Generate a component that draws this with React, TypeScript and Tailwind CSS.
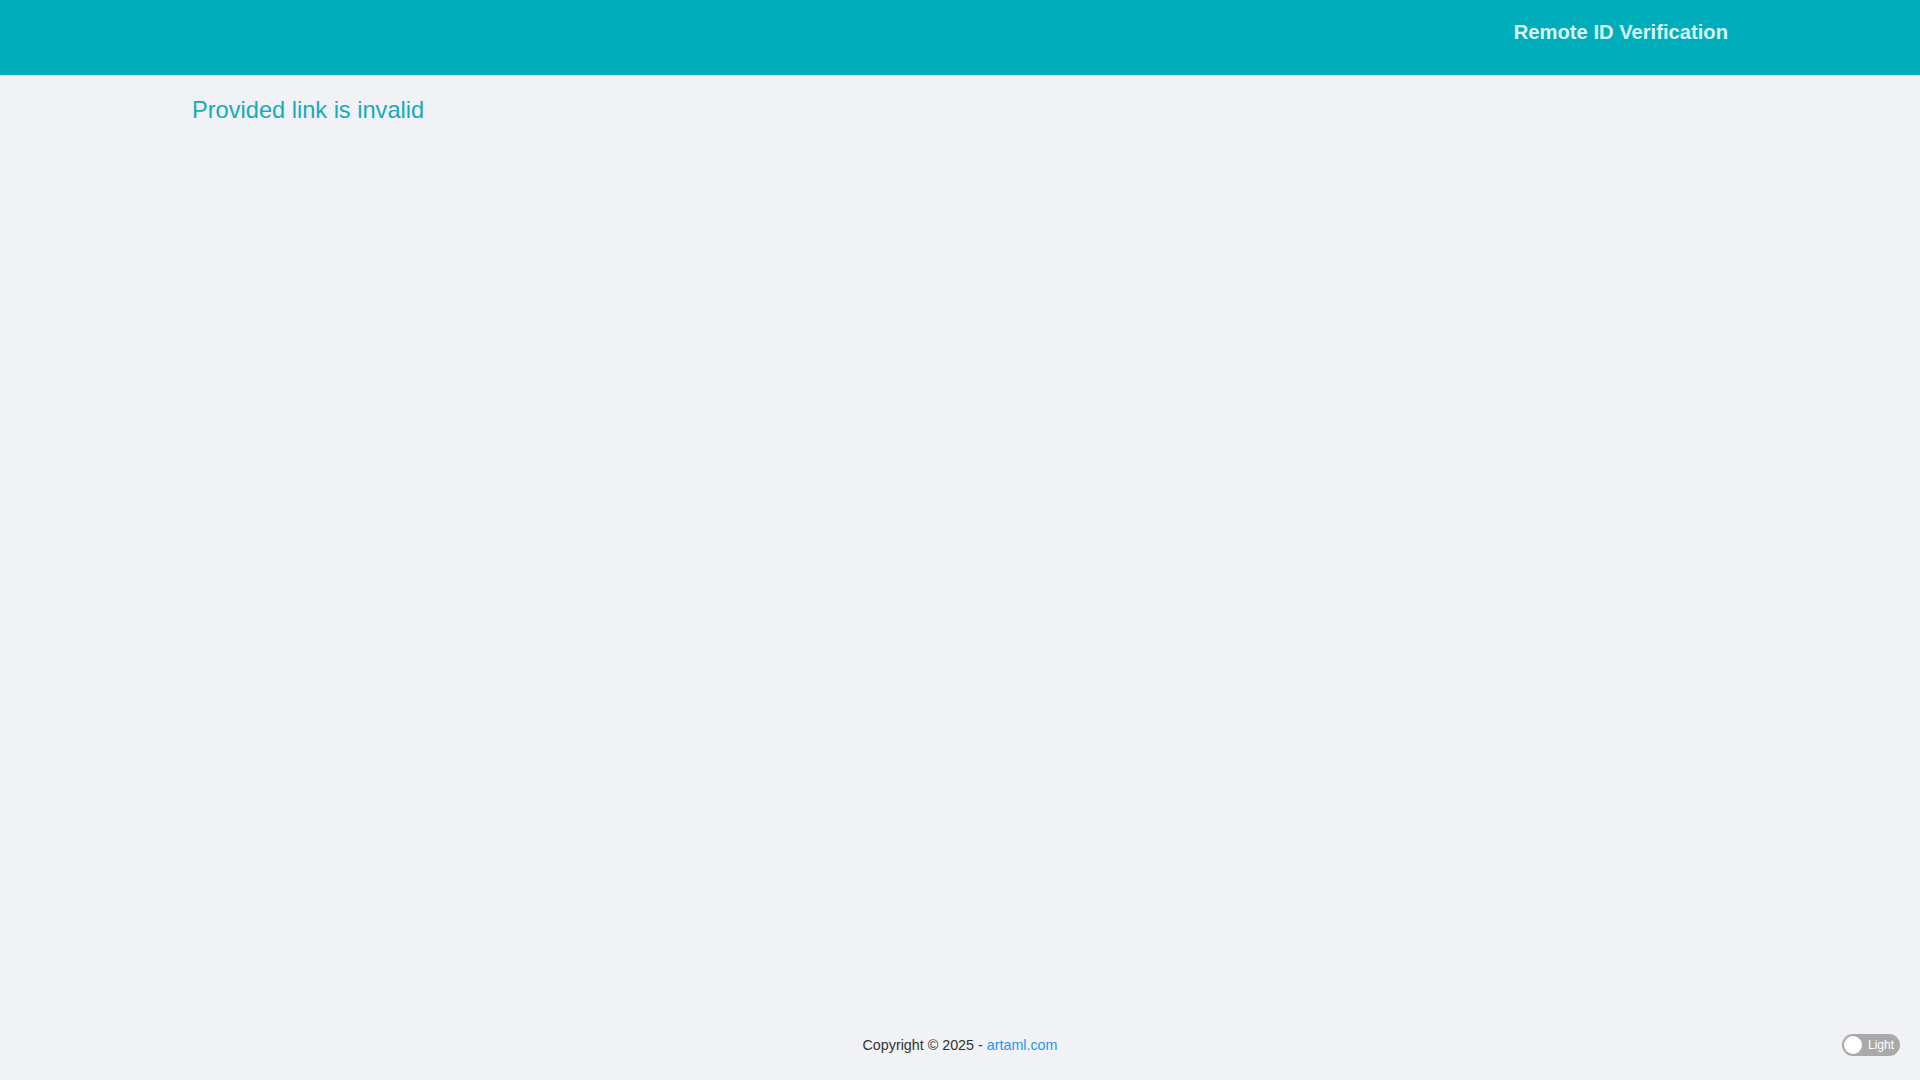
export default function App() {
  return (
    <div
      className="flex min-h-screen flex-col bg-[#f0f2f5]"
      style={{ fontFamily: '"Liberation Sans", Arial, sans-serif' }}
    >
      <header className="h-[75px] bg-[#00aebb]">
        <div className="mx-auto flex h-full max-w-[1536px] items-start justify-end pt-[19px]">
          <h1 className="text-[20.2px] font-bold leading-[26px] text-[#d9f4f6]">Remote ID Verification</h1>
        </div>
      </header>

      <main className="flex-1">
        <div className="mx-auto max-w-[1536px] pt-[19px]">
          <h2 className="text-[23.6px] leading-[32px] text-[#17aabb]">Provided link is invalid</h2>
        </div>
      </main>

      <footer className="relative flex h-[68px] items-center justify-center">
        <p className="text-[14.3px] text-[#333333]">
          Copyright © 2025 -{' '}
          <a href="#" className="text-[#2b95f0]">
            artaml.com
          </a>
        </p>
        <button className="absolute right-[20px] top-[22px] flex h-[22px] w-[58px] items-center rounded-full bg-[#a9a9a9] pl-[2px]">
          <span className="h-[18px] w-[18px] rounded-full bg-white" />
          <span className="ml-[6px] text-[12px] text-white">Light</span>
        </button>
      </footer>
    </div>
  );
}
